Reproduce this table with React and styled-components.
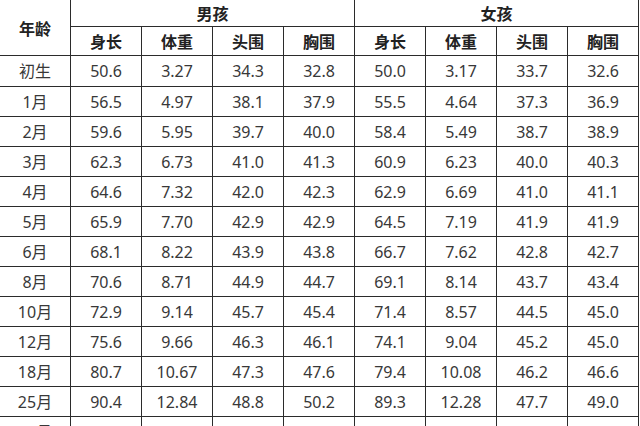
import React from 'react'
import styled, { createGlobalStyle } from 'styled-components'

const GlobalStyle = createGlobalStyle`
  html, body {
    margin: 0;
    padding: 0;
    background: #fff;
    overflow: hidden;
  }
`

const Table = styled.table`
  border-collapse: separate;
  border-spacing: 0;
  table-layout: fixed;
  width: 639px;
  font-family: "Noto Sans", "Noto Sans CJK SC", sans-serif;
  color: #383838;
`

const Cell = styled.td`
  box-sizing: border-box;
  height: ${p => p.$h || 30}px;
  padding: 0;
  text-align: center;
  vertical-align: middle;
  font-size: 16px;
  line-height: 1;
  border-right: 1px solid #2b2b2b;
  border-bottom: 1px solid #2b2b2b;
  white-space: nowrap;
`

const Head = styled(Cell).attrs({ as: 'th' })`
  font-family: "Noto Sans CJK SC", sans-serif;
  font-weight: 700;
  color: #222;
`

const AgeCell = styled(Cell)`
  font-family: "Noto Sans", "Noto Sans CJK SC", sans-serif;
`

const rows = [
  ['初生', '50.6', '3.27', '34.3', '32.8', '50.0', '3.17', '33.7', '32.6'],
  ['1月', '56.5', '4.97', '38.1', '37.9', '55.5', '4.64', '37.3', '36.9'],
  ['2月', '59.6', '5.95', '39.7', '40.0', '58.4', '5.49', '38.7', '38.9'],
  ['3月', '62.3', '6.73', '41.0', '41.3', '60.9', '6.23', '40.0', '40.3'],
  ['4月', '64.6', '7.32', '42.0', '42.3', '62.9', '6.69', '41.0', '41.1'],
  ['5月', '65.9', '7.70', '42.9', '42.9', '64.5', '7.19', '41.9', '41.9'],
  ['6月', '68.1', '8.22', '43.9', '43.8', '66.7', '7.62', '42.8', '42.7'],
  ['8月', '70.6', '8.71', '44.9', '44.7', '69.1', '8.14', '43.7', '43.4'],
  ['10月', '72.9', '9.14', '45.7', '45.4', '71.4', '8.57', '44.5', '45.0'],
  ['12月', '75.6', '9.66', '46.3', '46.1', '74.1', '9.04', '45.2', '45.0'],
  ['18月', '80.7', '10.67', '47.3', '47.6', '79.4', '10.08', '46.2', '46.6'],
  ['25月', '90.4', '12.84', '48.8', '50.2', '89.3', '12.28', '47.7', '49.0'],
  ['30月', '93.4', '13.80', '49.1', '50.9', '92.0', '13.10', '48.1', '49.9'],
]

const measures = ['身长', '体重', '头围', '胸围']

export default function App() {
  return (
    <>
      <GlobalStyle />
      <Table>
        <colgroup>
          {Array.from({ length: 9 }).map((_, i) => (
            <col key={i} style={{ width: 71 }} />
          ))}
        </colgroup>
        <thead>
          <tr>
            <Head rowSpan={2} $h={56}>年龄</Head>
            <Head colSpan={4} $h={27}>男孩</Head>
            <Head colSpan={4} $h={27}>女孩</Head>
          </tr>
          <tr>
            {[...measures, ...measures].map((m, i) => (
              <Head key={i} $h={29}>{m}</Head>
            ))}
          </tr>
        </thead>
        <tbody>
          {rows.map(r => (
            <tr key={r[0]}>
              <AgeCell $h={r[0] === '初生' ? 31 : 30}>{r[0]}</AgeCell>
              {r.slice(1).map((v, i) => (
                <Cell key={i} $h={r[0] === '初生' ? 31 : 30}>{v}</Cell>
              ))}
            </tr>
          ))}
        </tbody>
      </Table>
    </>
  )
}
